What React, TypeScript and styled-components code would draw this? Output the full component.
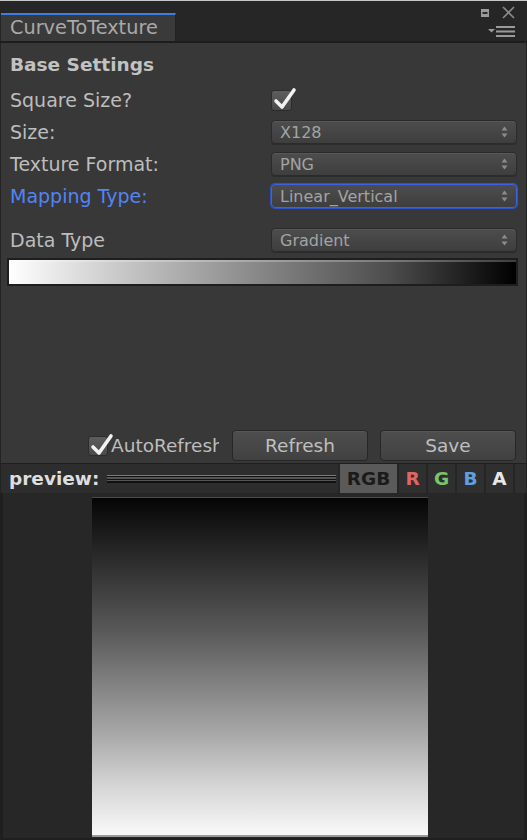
import React from "react";
import styled, { createGlobalStyle } from "styled-components";

const Global = createGlobalStyle`
  html, body { margin: 0; padding: 0; background: #262626; overflow: hidden; }
  * { box-sizing: border-box; }
`;

const Window = styled.div`
  width: 527px;
  height: 840px;
  display: flex;
  flex-direction: column;
  font-family: "DejaVu Sans", Verdana, sans-serif;
  background: #262626;
`;

const TitleBar = styled.div`
  height: 43px;
  flex: none;
  display: flex;
  align-items: flex-end;
  justify-content: space-between;
  background: #262626;
  border-top: 1px solid #c8c8c8;
  border-bottom: 2px solid #1d1d1d;
  padding-left: 1px;
`;

const Tab = styled.div`
  width: 175px;
  height: 28px;
  background: #3a3a3a;
  border-top: 2px solid #3e7de6;
  border-right: 1px solid #232323;
  color: #a9a9a9;
  font-size: 19.3px;
  line-height: 26px;
  padding-left: 9px;
`;

const WinIcons = styled.div`
  display: flex;
  flex-direction: column;
  align-items: flex-end;
  align-self: stretch;
  padding: 5px 12px 4px 0;
  justify-content: space-between;
`;

const IconRow = styled.div`
  display: flex;
  align-items: center;
  gap: 13px;
`;

const Panel = styled.div`
  flex: 1;
  display: flex;
  flex-direction: column;
  background: #383838;
  border-left: 1px solid #232323;
  border-right: 1px solid #232323;
  padding: 10px 10px 2px 9px;
`;

const Heading = styled.div`
  height: 24px;
  line-height: 24px;
  font-weight: bold;
  font-size: 18.5px;
  color: #c2c2c2;
  margin-bottom: 11px;
`;

const Row = styled.div<{ $gap?: number }>`
  display: grid;
  grid-template-columns: 261px 246px;
  align-items: center;
  height: 24px;
  margin-bottom: ${(p) => p.$gap ?? 8}px;
`;

const Label = styled.div<{ $active?: boolean }>`
  font-size: 19px;
  color: ${(p) => (p.$active ? "#5284f6" : "#bdbdbd")};
  white-space: nowrap;
`;

const Select = styled.div<{ $focus?: boolean }>`
  height: 24px;
  display: flex;
  align-items: center;
  justify-content: space-between;
  padding: 0 8px 0 8px;
  border-radius: 4px;
  background: linear-gradient(#4d4d4d, #3e3e3e);
  border: 1px solid ${(p) => (p.$focus ? "#3c62e0" : "#2b2b2b")};
  box-shadow: ${(p) =>
    p.$focus ? "0 0 0 1px #2f52c8" : "inset 0 1px 0 #575757, 0 1px 0 #2c2c2c"};
  color: #a3a3a3;
  font-size: 16px;
`;

const CheckBox = styled.div<{ $size?: number }>`
  position: relative;
  width: ${(p) => p.$size ?? 21}px;
  height: ${(p) => p.$size ?? 21}px;
  border-radius: 3px;
  background: linear-gradient(#5d5d5d, #4a4a4a);
  border: 1px solid #2c2c2c;
  flex: none;
`;

const Check = styled.svg`
  position: absolute;
  left: 1px;
  top: -4px;
`;

const GradientBar = styled.div`
  margin: 6px -2px 0 -3px;
  height: 28px;
  border: 2px solid #1e1e1e;
  background: linear-gradient(to right, #ffffff, #c8c8c8 22%, #8a8a8a 48%, #4d4d4d 75%, #000000);
  box-shadow: inset 0 2px 0 rgba(255, 255, 255, 0.25);
`;

const Spacer = styled.div`
  flex: 1;
`;

const ActionRow = styled.div`
  display: flex;
  align-items: center;
  justify-content: flex-end;
  gap: 12px;
  height: 31px;
`;

const AutoToggle = styled.div`
  display: flex;
  align-items: center;
  gap: 3px;
  margin-right: 1px;
`;

const Clip = styled.div`
  width: 108px;
  overflow: hidden;
  white-space: nowrap;
  font-size: 18.5px;
  color: #bdbdbd;
`;

const Button = styled.div`
  width: 136px;
  height: 31px;
  border-radius: 4px;
  background: linear-gradient(#4e4e4e, #414141);
  border: 1px solid #272727;
  box-shadow: inset 0 1px 0 #575757;
  color: #bfbfbf;
  font-size: 18.5px;
  display: flex;
  align-items: center;
  justify-content: center;
`;

const Toolbar = styled.div`
  height: 30px;
  flex: none;
  display: flex;
  align-items: stretch;
  background: #2d2d2d;
  border-top: 1px solid #1f1f1f;
  border-left: 1px solid #222;
  border-right: 1px solid #222;
`;

const ToolLabel = styled.div`
  font-weight: bold;
  font-size: 18.5px;
  color: #dedede;
  padding-left: 8px;
  width: 106px;
  display: flex;
  align-items: center;
`;

const Slider = styled.div`
  flex: 1;
  align-self: center;
  height: 8px;
  margin-right: 2px;
  background: linear-gradient(
    #7a7a7a 0, #7a7a7a 1px,
    #111 1px, #111 2px,
    #555 2px, #555 4px,
    #111 4px, #111 5px,
    #555 5px, #555 6px,
    #111 6px, #111 8px
  );
`;

const Channel = styled.div<{ $color: string; $active?: boolean }>`
  width: ${(p) => (p.$active ? 57 : 27)}px;
  margin-left: 2px;
  background: ${(p) => (p.$active ? "#5a5a5a" : "#2f2f2f")};
  color: ${(p) => p.$color};
  font-weight: bold;
  font-size: 18.5px;
  display: flex;
  align-items: center;
  justify-content: center;
  box-shadow: -2px 0 0 #252525;
`;

const ToolEnd = styled.div`
  width: 11px;
  margin-left: 2px;
  background: #2f2f2f;
  box-shadow: -2px 0 0 #252525;
`;

const Preview = styled.div`
  height: 347px;
  flex: none;
  background: #272727;
  border-left: 3px solid #1f1f1f;
  border-right: 3px solid #1f1f1f;
  border-bottom: 2px solid #1f1f1f;
  padding: 4px 0 0 89px;
`;

const PreviewImage = styled.div`
  width: 336px;
  height: 340px;
  background: linear-gradient(#050505, #5a5a5a 40%, #a8a8a8 70%, #d4d4d4 85%, #f9f9f9);
  border-top: 1px solid #4a4a4a;
  border-bottom: 2px solid #9a9a9a;
`;

const Arrows = () => (
  <svg width="7" height="12" viewBox="0 0 7 12">
    <path d="M3.5 0.5 L6.5 4.5 H0.5 Z" fill="#8c8c8c" />
    <path d="M3.5 11.5 L6.5 7.5 H0.5 Z" fill="#8c8c8c" />
  </svg>
);

const Tick = () => (
  <Check width="24" height="24" viewBox="0 0 24 24">
    <path d="M3 14 L9 20 L21 3" fill="none" stroke="#f2f2f2" strokeWidth="3.6" strokeLinecap="round" strokeLinejoin="round" />
  </Check>
);

const Dropdown = ({ value, focus }: { value: string; focus?: boolean }) => (
  <Select $focus={focus}>
    <span>{value}</span>
    <Arrows />
  </Select>
);

export default function App() {
  return (
    <Window>
      <Global />
      <TitleBar>
        <Tab>CurveToTexture</Tab>
        <WinIcons>
          <IconRow>
            <svg width="8" height="8" viewBox="0 0 8 8">
              <rect x="0" y="0" width="8" height="8" fill="#9a9a9a" />
              <rect x="1.5" y="3" width="5" height="2" fill="#2a2a2a" />
            </svg>
            <svg width="13" height="13" viewBox="0 0 13 13">
              <path d="M1 1 L12 12 M12 1 L1 12" stroke="#8a8a8a" strokeWidth="1.6" />
            </svg>
          </IconRow>
          <svg width="27" height="11" viewBox="0 0 27 11">
            <path d="M0 3 H7 L3.5 6.5 Z" fill="#9a9a9a" />
            <rect x="8" y="0" width="19" height="2" fill="#9a9a9a" />
            <rect x="8" y="4.5" width="19" height="2" fill="#9a9a9a" />
            <rect x="8" y="9" width="19" height="2" fill="#9a9a9a" />
          </svg>
        </WinIcons>
      </TitleBar>
      <Panel>
        <Heading>Base Settings</Heading>
        <Row>
          <Label>Square Size?</Label>
          <CheckBox>
            <Tick />
          </CheckBox>
        </Row>
        <Row>
          <Label>Size:</Label>
          <Dropdown value="X128" />
        </Row>
        <Row>
          <Label>Texture Format:</Label>
          <Dropdown value="PNG" />
        </Row>
        <Row $gap={20}>
          <Label $active>Mapping Type:</Label>
          <Dropdown value="Linear_Vertical" focus />
        </Row>
        <Row $gap={0}>
          <Label>Data Type</Label>
          <Dropdown value="Gradient" />
        </Row>
        <GradientBar />
        <Spacer />
        <ActionRow>
          <AutoToggle>
            <CheckBox $size={20}>
              <Tick />
            </CheckBox>
            <Clip>AutoRefresh</Clip>
          </AutoToggle>
          <Button>Refresh</Button>
          <Button>Save</Button>
        </ActionRow>
      </Panel>
      <Toolbar>
        <ToolLabel>preview:</ToolLabel>
        <Slider />
        <Channel $color="#1b1b1b" $active>RGB</Channel>
        <Channel $color="#e06565">R</Channel>
        <Channel $color="#7cc36b">G</Channel>
        <Channel $color="#5d9fe0">B</Channel>
        <Channel $color="#e8e8e8">A</Channel>
        <ToolEnd />
      </Toolbar>
      <Preview>
        <PreviewImage />
      </Preview>
    </Window>
  );
}
